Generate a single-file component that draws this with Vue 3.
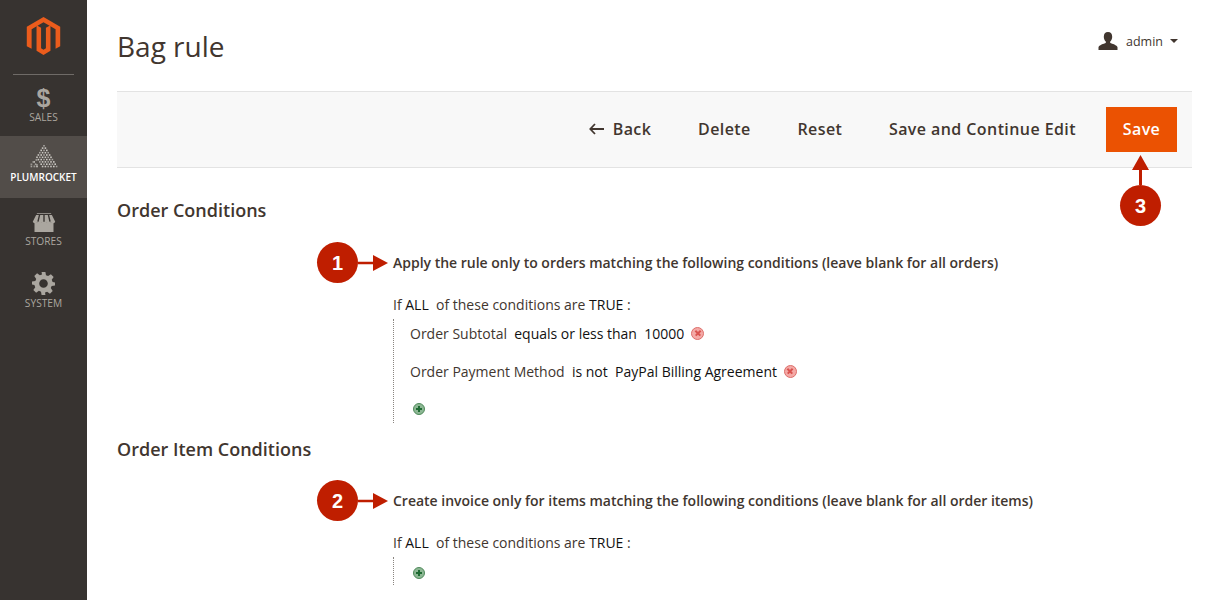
<script setup>
const nav = [
  { label: 'SALES', icon: 'sales' },
  { label: 'PLUMROCKET', icon: 'plum', active: true },
  { label: 'STORES', icon: 'stores' },
  { label: 'SYSTEM', icon: 'system' },
]
const dots = []
for (let r = 0; r < 10; r++) {
  for (let c = 0; c <= r; c++) {
    const x = 15 - r * 1.4 + c * 2.8
    const skip = r > 5 && c < r - 5 && (r + c) % 2 === 0
    if (!skip) dots.push({ x, y: 1 + r * 2.3, o: (r + c) % 3 === 0 ? 0.7 : 1 })
  }
}
const scatter = [[1.5, 19.500], [4.500, 21.500], [3.500, 17], [7, 20], [6.500, 15]]
</script>

<template>
  <div class="page">
    <aside class="sidebar">
      <div class="logo">
        <svg width="35" height="39" viewBox="0 0 36 42">
          <path fill="#eb5c1c" d="M18 0 36 10.400V31.400l-5 2.900V13.200L18 5.700 5.200 13.200V34.300L0 31.400V10.400Z" />
          <path fill="#eb5c1c" d="M15.400 11.600V33.600l2.600 1.600 2.600-1.600V11.600l4.900-2.800V36.300L18 41 10.500 36.300V8.800Z" />
        </svg>
      </div>
      <nav class="menu">
        <div v-for="item in nav" :key="item.label" class="item" :class="[item.icon, { active: item.active }]">
          <span class="glyph">
            <span v-if="item.icon === 'sales'" class="dollar">$</span>
            <svg v-else-if="item.icon === 'plum'" width="30" height="24" viewBox="0 0 30 24">
              <rect v-for="(d, i) in dots" :key="i" :x="d.x - 0.8" :y="d.y" width="1.600" height="1.600" fill="#cbc8c3" :opacity="d.o" />
              <rect v-for="(s, i) in scatter" :key="'s' + i" :x="s[0]" :y="s[1]" width="1.800" height="1.800" fill="#9b9893" />
            </svg>
            <svg v-else-if="item.icon === 'stores'" width="24" height="19" viewBox="0 0 26 22">
              <path fill="#aaa69f" d="M2 11h22v11H2z" />
              <path fill="#aaa69f" d="M5 0h16l5 10a3 3 0 0 1-5 1 3 3 0 0 1-5 0 3 3 0 0 1-6 0 3 3 0 0 1-5 0 3 3 0 0 1-5-1Z" />
              <path stroke="#373330" stroke-width="1.600" fill="none" d="M8 1.500 6 10M13 1.500V10M18 1.500l2 8.500M3 1.600h20" />
            </svg>
            <svg v-else width="23" height="23" viewBox="0 0 24 24">
              <path fill="#aaa69f" fill-rule="evenodd" d="M10 0h4l.6 3.400 2.200.9L19.700 2.400l2.900 2.900-2 2.900.9 2.200L24 11v3l-3.500.6-.9 2.200 2 2.900-2.900 2.900-2.900-2-2.200.9L14 24h-4l-.6-3.500-2.200-.9-2.900 2L1.400 18.700l2-2.900-.9-2.200L0 13v-3l3.500-.6.9-2.200-2-2.900L5.300 1.400l2.900 2 2.200-.9ZM12 7.500a4.500 4.500 0 1 0 0 9 4.500 4.500 0 0 0 0-9Z" />
            </svg>
          </span>
          <span class="label">{{ item.label }}</span>
        </div>
      </nav>
    </aside>

    <main class="main">
      <header class="head">
        <h1>Bag rule</h1>
        <div class="user">
          <svg width="20" height="18" viewBox="0 0 20 18">
            <path fill="#41362f" d="M10 0c2.800 0 4.200 2 4.200 4.700 0 2-.8 3.800-2 4.900v1.300c1.800.8 7 2 7.300 4.300V18H.5v-2.800c.3-2.300 5.500-3.500 7.300-4.300V9.600c-1.200-1.100-2-2.900-2-4.900C5.800 2 7.200 0 10 0Z" />
          </svg>
          <span>admin</span>
          <i class="caret"></i>
        </div>
      </header>

      <div class="actions">
        <span class="act back">
          <svg width="15" height="12" viewBox="0 0 15 12"><path d="M6 1 1.300 6 6 11M1.500 6H15" fill="none" stroke="#41362f" stroke-width="1.800" /></svg>
          Back
        </span>
        <span class="act">Delete</span>
        <span class="act">Reset</span>
        <span class="act">Save and Continue Edit</span>
        <span class="save">Save</span>
      </div>

      <section class="section first">
        <h2>Order Conditions</h2>
        <div class="rule">
          <div class="note">
            <span class="badge">1</span>
            <svg class="pointer" width="30" height="16" viewBox="0 0 30 16"><path fill="#bf1e00" d="M0 6.700h15V0l15 8-15 8V9.300H0Z" /></svg>
            <strong>Apply the rule only to orders matching the following conditions (leave blank for all orders)</strong>
          </div>
          <p class="if">If <b>ALL</b>&nbsp; of these conditions are <b>TRUE</b> :</p>
          <ul class="tree">
            <li class="cond">Order Subtotal&nbsp; <b>equals or less than</b>&nbsp; <b>10000</b><i class="del"></i></li>
            <li class="cond">Order Payment Method&nbsp; <b>is not</b>&nbsp; <b>PayPal Billing Agreement</b><i class="del"></i></li>
            <li class="addrow"><i class="add"></i></li>
          </ul>
        </div>
      </section>

      <section class="section second">
        <h2>Order Item Conditions</h2>
        <div class="rule">
          <div class="note">
            <span class="badge">2</span>
            <svg class="pointer" width="30" height="16" viewBox="0 0 30 16"><path fill="#bf1e00" d="M0 6.700h15V0l15 8-15 8V9.300H0Z" /></svg>
            <strong>Create invoice only for items matching the following conditions (leave blank for all order items)</strong>
          </div>
          <p class="if">If <b>ALL</b>&nbsp; of these conditions are <b>TRUE</b> :</p>
          <ul class="tree short">
            <li class="addrow"><i class="add"></i></li>
          </ul>
        </div>
      </section>

      <div class="callout">
        <svg width="17" height="30" viewBox="0 0 17 30"><path fill="#bf1e00" d="M8.500 0 17 15H10V30H7V15H0Z" /></svg>
        <span class="badge">3</span>
      </div>
    </main>
  </div>
</template>

<style>
html, body { margin: 0; overflow: hidden; background: #fff; }
</style>

<style scoped>
.page {
  display: flex;
  width: 1206px;
  height: 600px;
  overflow: hidden;
  font-family: "Open Sans", sans-serif;
  color: #41362f;
}
.sidebar { width: 87px; flex: none; background: #373330; }
.logo {
  display: flex;
  justify-content: center;
  height: 75px;
  padding-top: 17px;
  box-sizing: border-box;
  margin: 0 13px;
  border-bottom: 1px solid #6f6b67;
}
.logo svg { flex: none; }
.item {
  display: flex;
  flex-direction: column;
  align-items: center;
  height: 62px;
  box-sizing: border-box;
  color: #aaa69f;
  font-size: 10.200px;
  line-height: 14px;
}
.glyph { display: flex; align-items: flex-start; justify-content: center; }
.sales { height: 61px; padding-top: 11px; }
.sales .glyph { height: 24px; }
.dollar { font: 700 25px/24px "Liberation Sans", sans-serif; color: #aaa69f; }
.active { background: #524d49; color: #fff; font-size: 10px; font-weight: 600; padding-top: 8px; }
.active .label { margin-top: 2px; }
.stores { padding-top: 15px; }
.stores .label { margin-top: 2px; }
.system { padding-top: 12px; }
.system .label { margin-top: 1px; }

.main { position: relative; flex: none; width: 1075px; margin-left: 30px; }
.head { display: flex; justify-content: space-between; height: 91px; }
h1 { margin: 27px 0 0; font-size: 28px; line-height: 38px; font-weight: 400; }
.user { display: flex; align-items: center; gap: 9px; height: 20px; margin: 31px 14px 0 0; font-size: 12.500px; }
.user svg { margin-right: -1px; }
.caret { border: 4.500px solid transparent; border-top-color: #41362f; border-bottom: 0; margin-left: -2px; }

.actions {
  display: flex;
  align-items: center;
  justify-content: flex-end;
  gap: 46.700px;
  height: 75px;
  padding-right: 15px;
  background: #f8f8f8;
  border-top: 1px solid #e3e3e3;
  border-bottom: 1px solid #e3e3e3;
  font-size: 16px;
  font-weight: 600;
  letter-spacing: .42px;
}
.act { margin-top: -2px; }
.back { display: flex; align-items: center; gap: 9px; }
.save {
  display: flex;
  align-items: center;
  justify-content: center;
  box-sizing: border-box;
  width: 71px;
  height: 45px;
  padding-bottom: 2px;
  margin-left: -16.700px;
  background: #eb5202;
  color: #fff;
}

.section h2 { margin: 0; font-size: 18px; line-height: 24px; font-weight: 600; }
.first { padding-top: 30px; height: 269px; box-sizing: border-box; }
.second { height: 150px; }
.rule { padding-left: 276px; }
.note { position: relative; height: 20px; margin-top: 31px; }
.second .note { margin-top: 30px; }
.note strong { display: block; font-size: 14px; line-height: 20px; font-weight: 600; letter-spacing: -.01px; white-space: nowrap; }
.note .badge { position: absolute; left: -76px; top: -11px; }
.pointer { position: absolute; left: -35px; top: 2px; }
.badge {
  display: flex;
  align-items: center;
  justify-content: center;
  width: 41px;
  height: 41px;
  border-radius: 50%;
  background: #bf1e00;
  color: #fff;
  font: 700 20px/1 "Liberation Sans", sans-serif;
}
.if { margin: 22px 0 0; font-size: 14px; line-height: 20px; }
b { font-weight: 400; color: #111; }
.tree {
  list-style: none;
  margin: 4px 0 0;
  padding: 0 0 0 16px;
  border-left: 1px dotted #8a8580;
  height: 104px;
  font-size: 14px;
}
.tree.short { height: 25px; padding-top: 3px; }
.cond { display: flex; align-items: center; height: 38px; white-space: pre; }
.cond:first-child { height: 28px; margin-bottom: 5px; }
.addrow { display: flex; align-items: center; height: 26px; margin-top: 6px; }
.short .addrow { margin-top: 0; }
.del, .add {
  display: block;
  box-sizing: border-box;
  position: relative;
  width: 13px;
  height: 13px;
  border-radius: 50%;
}
.del { background: #f4a9a6; border: 1px solid #dd6e6a; margin-left: 7px; }
.del::before, .del::after, .add::before, .add::after {
  content: "";
  position: absolute;
  left: 50%;
  top: 50%;
}
.del::before { width: 7px; height: 1.500px; background: #d9534f; transform: translate(-50%, -50%) rotate(45deg); }
.del::after { width: 7px; height: 1.500px; background: #d9534f; transform: translate(-50%, -50%) rotate(-45deg); }
.add { background: #8cb793; border: 1px solid #4f8a5b; margin-left: 3px; width: 12px; height: 12px; }
.add::before { width: 6px; height: 2px; transform: translate(-50%, -50%); background: #1f6a33; }
.add::after { width: 2px; height: 6px; transform: translate(-50%, -50%); background: #1f6a33; }

.callout {
  position: absolute;
  top: 155px;
  left: 1003px;
  display: flex;
  flex-direction: column;
  align-items: center;
  width: 41px;
}
</style>
